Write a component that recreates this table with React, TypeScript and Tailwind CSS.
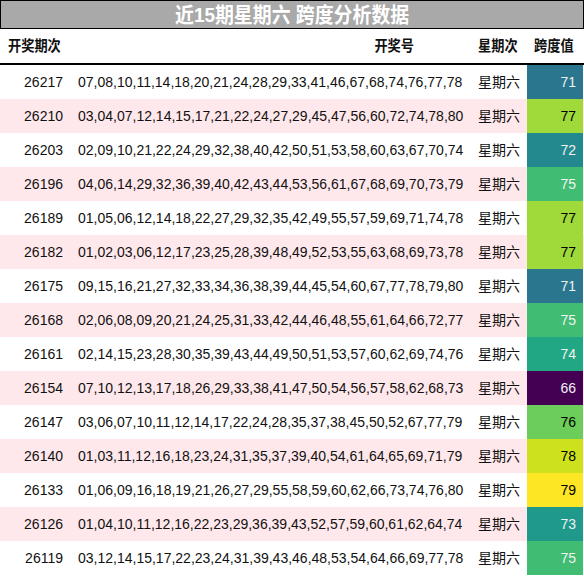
import React from 'react';

interface Draw {
  issue: string;
  nums: string;
  span: number;
}

const DRAWS: Draw[] = [
  { issue: '26217', nums: '07,08,10,11,14,18,20,21,24,28,29,33,41,46,67,68,74,76,77,78', span: 71 },
  { issue: '26210', nums: '03,04,07,12,14,15,17,21,22,24,27,29,45,47,56,60,72,74,78,80', span: 77 },
  { issue: '26203', nums: '02,09,10,21,22,24,29,32,38,40,42,50,51,53,58,60,63,67,70,74', span: 72 },
  { issue: '26196', nums: '04,06,14,29,32,36,39,40,42,43,44,53,56,61,67,68,69,70,73,79', span: 75 },
  { issue: '26189', nums: '01,05,06,12,14,18,22,27,29,32,35,42,49,55,57,59,69,71,74,78', span: 77 },
  { issue: '26182', nums: '01,02,03,06,12,17,23,25,28,39,48,49,52,53,55,63,68,69,73,78', span: 77 },
  { issue: '26175', nums: '09,15,16,21,27,32,33,34,36,38,39,44,45,54,60,67,77,78,79,80', span: 71 },
  { issue: '26168', nums: '02,06,08,09,20,21,24,25,31,33,42,44,46,48,55,61,64,66,72,77', span: 75 },
  { issue: '26161', nums: '02,14,15,23,28,30,35,39,43,44,49,50,51,53,57,60,62,69,74,76', span: 74 },
  { issue: '26154', nums: '07,10,12,13,17,18,26,29,33,38,41,47,50,54,56,57,58,62,68,73', span: 66 },
  { issue: '26147', nums: '03,06,07,10,11,12,14,17,22,24,28,35,37,38,45,50,52,67,77,79', span: 76 },
  { issue: '26140', nums: '01,03,11,12,16,18,23,24,31,35,37,39,40,54,61,64,65,69,71,79', span: 78 },
  { issue: '26133', nums: '01,06,09,16,18,19,21,26,27,29,55,58,59,60,62,66,73,74,76,80', span: 79 },
  { issue: '26126', nums: '01,04,10,11,12,16,22,23,29,36,39,43,52,57,59,60,61,62,64,74', span: 73 },
  { issue: '26119', nums: '03,12,14,15,17,22,23,24,31,39,43,46,48,53,54,64,66,69,77,78', span: 75 },
];

// viridis-like swatch per span value
const SPAN_CLASS: Record<number, string> = {
  66: 'bg-[#440154] text-[#f1f1f1]',
  71: 'bg-[#2a768e] text-[#f1f1f1]',
  72: 'bg-[#23898e] text-[#f1f1f1]',
  73: 'bg-[#1f9a8a] text-[#f1f1f1]',
  74: 'bg-[#22a785] text-[#f1f1f1]',
  75: 'bg-[#40bd72] text-[#f1f1f1]',
  76: 'bg-[#6ccd5a] text-black',
  77: 'bg-[#9fd93a] text-black',
  78: 'bg-[#cde11d] text-black',
  79: 'bg-[#fde725] text-black',
};

const CJK = "font-['Liberation_Sans','Noto_Sans_CJK_SC',sans-serif]";

export default function App() {
  return (
    <div className={`w-[584px] h-[576px] bg-white text-[14px] text-[#111] ${CJK}`}>
      {/* Title */}
      <div className="h-[29px] border border-black bg-[#a9a9a9] flex items-center justify-center">
        <span className="text-white font-bold text-[21px] leading-none inline-block scale-x-[0.9]">
          近15期星期六 跨度分析数据
        </span>
      </div>

      {/* Header */}
      <div className="h-[36px] flex items-center border-b-2 border-black font-bold">
        <div className="w-[70px] pl-2">
          <span className="inline-block origin-left scale-x-[0.88] text-[15px]">开奖期次</span>
        </div>
        <div className="w-[400px] flex justify-end pr-[56px]">
          <span className="inline-block origin-right scale-x-[0.88] text-[15px]">开奖号</span>
        </div>
        <div className="w-[57px] pl-2">
          <span className="inline-block origin-left scale-x-[0.88] text-[15px]">星期次</span>
        </div>
        <div className="w-[56px] pl-[7px]">
          <span className="inline-block origin-left scale-x-[0.88] text-[15px]">跨度值</span>
        </div>
      </div>

      {/* Rows */}
      <div className="flex flex-col">
        {DRAWS.map((d, i) => (
          <div
            key={d.issue}
            className={`h-[34px] flex items-stretch ${i % 2 === 1 ? 'bg-[#ffe8eb]' : 'bg-white'}`}
          >
            <div className="w-[70px] flex items-center justify-end pr-[7px]">{d.issue}</div>
            <div className="w-[400px] flex items-center pl-2">{d.nums}</div>
            <div className="w-[57px] flex items-center pl-2">星期六</div>
            <div className={`w-[56px] flex items-center justify-end pr-[7px] ${SPAN_CLASS[d.span]}`}>
              {d.span}
            </div>
          </div>
        ))}
      </div>
    </div>
  );
}
